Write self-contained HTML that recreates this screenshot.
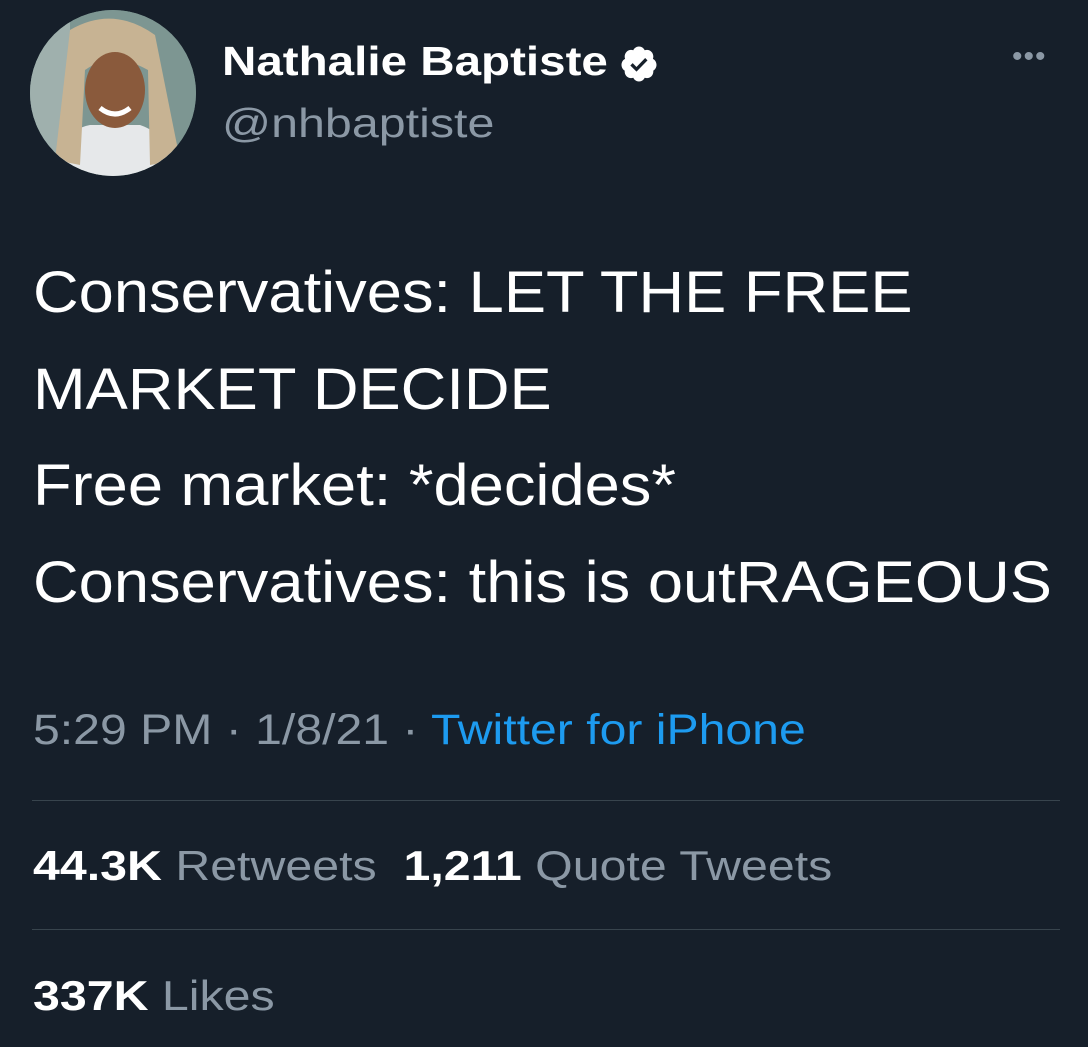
<!DOCTYPE html>
<html><head><meta charset="utf-8"><style>
body{margin:0;width:1088px;height:1047px;background:#161f2a;font-family:"Liberation Sans",sans-serif;color:#fff;position:relative;overflow:hidden}
.a{position:absolute;white-space:nowrap;transform-origin:0 0}
.av{left:30px;top:10px;width:166px;height:166px;border-radius:50%;overflow:hidden;background:#6f8a86}
.g{color:#8b98a5}
.hr{position:absolute;left:32px;width:1028px;height:1px;background:#38444d}
</style></head><body>
<div class="a av">
<svg width="166" height="166" viewBox="0 0 166 166">
<rect width="166" height="166" fill="#7d9692"/>
<rect x="0" y="0" width="40" height="166" fill="#9fb0ad"/>
<path d="M20 166 Q30 120 60 115 L110 115 Q140 125 150 166Z" fill="#e6e8ea"/>
<path d="M40 20 Q83 -5 125 25 L150 150 L120 155 L118 60 Q83 40 55 60 L50 155 L25 150Z" fill="#c7b393"/>
<ellipse cx="85" cy="80" rx="30" ry="38" fill="#8a5a3c"/>
<path d="M70 98 Q85 110 100 98" stroke="#fff" stroke-width="5" fill="none"/>
</svg></div>
<div class="a" style="left:222px;top:38px;font-size:41px;font-weight:bold;transform:scaleX(1.16)">Nathalie Baptiste</div>
<svg class="a" style="left:619px;top:44px" width="40" height="40" viewBox="0 0 24 24"><path fill="#fff" d="M22.5 12.5c0-1.58-.875-2.95-2.148-3.6.154-.435.238-.905.238-1.4 0-2.210-1.710-3.998-3.818-3.998-.47 0-.92.084-1.336.25C14.818 2.415 13.51 1.5 12 1.5s-2.816.917-3.437 2.25c-.415-.165-.866-.25-1.336-.25-2.11 0-3.818 1.79-3.818 4 0 .494.083.964.237 1.4-1.272.65-2.147 2.018-2.147 3.6 0 1.495.782 2.798 1.942 3.486-.02.17-.032.34-.032.514 0 2.21 1.708 4 3.818 4 .47 0 .92-.086 1.335-.25.62 1.334 1.926 2.25 3.437 2.25 1.512 0 2.818-.916 3.437-2.25.415.163.865.248 1.336.248 2.11 0 3.818-1.79 3.818-4 0-.174-.012-.344-.033-.513 1.158-.687 1.943-1.990 1.943-3.484z"/><path fill="#161f2a" d="M10.5 16.6l-3.7-3.7 1.4-1.4 2.3 2.3 5.2-5.4 1.4 1.4z"/></svg>
<div class="a g" style="left:222px;top:100px;font-size:41px;transform:scaleX(1.18)">@nhbaptiste</div>
<div class="a g" style="left:1012px;top:40px;font-size:30px;letter-spacing:1px">•••</div>
<div class="a" style="left:33px;top:245px;font-size:58px;line-height:96.5px;transform:scaleX(1.09)">Conservatives: LET THE FREE<br>MARKET DECIDE<br>Free market: *decides*<br>Conservatives: this is outRAGEOUS</div>
<div class="a g" style="left:33px;top:706px;font-size:43px;transform:scaleX(1.12)">5:29 PM · 1/8/21 · <span style="color:#1d9bf0">Twitter for iPhone</span></div>
<div class="hr" style="top:800px"></div>
<div class="a" style="left:33px;top:842px;font-size:42px;transform:scaleX(1.15)"><b>44.3K</b> <span class="g">Retweets</span>&nbsp; <b>1,211</b> <span class="g">Quote Tweets</span></div>
<div class="hr" style="top:929px"></div>
<div class="a" style="left:33px;top:972px;font-size:42px;transform:scaleX(1.15)"><b>337K</b> <span class="g">Likes</span></div>
</body></html>
